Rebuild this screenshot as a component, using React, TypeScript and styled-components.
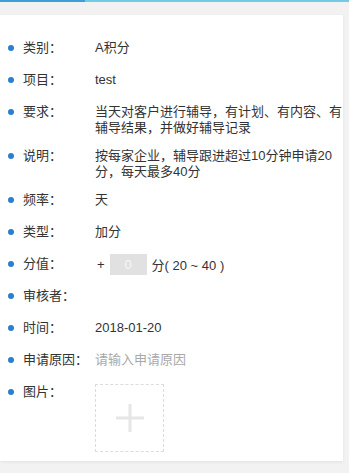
import styled, { createGlobalStyle } from 'styled-components';

const GlobalStyle = createGlobalStyle`
  html, body {
    margin: 0;
    padding: 0;
    background: #f2f2f2;
  }
  body {
    font-family: "Liberation Sans", "Noto Sans CJK SC", sans-serif;
    font-size: 13px;
    color: #333;
  }
`;

const Page = styled.div`
  width: 349px;
  height: 473px;
  display: flex;
  flex-direction: column;
  background: #f2f2f2;
  overflow: hidden;
`;

const TabLine = styled.div`
  display: flex;
  height: 2px;
  background: #70cbe6;
`;

const TabActive = styled.div`
  width: 85px;
  background: #3f9ed6;
`;

const Card = styled.div`
  box-sizing: border-box;
  margin: 13px 6px 0 0;
  height: 446px;
  padding: 17px 0 0 0;
  background: #fff;
  box-shadow: 0 1px 3px rgba(0, 0, 0, 0.07);
`;

const Row = styled.div`
  display: flex;
  align-items: flex-start;
  padding: 6px 0;
`;

const Bullet = styled.span`
  flex: none;
  width: 6px;
  height: 6px;
  border-radius: 50%;
  background: #2c7fd0;
  margin: 7px 9px 0 8px;
`;

const Label = styled.div`
  flex: none;
  width: 72px;
  line-height: 20px;
  color: #333;
  white-space: nowrap;
`;

const Value = styled.div`
  flex: 1;
  min-width: 0;
  line-height: 16px;
  margin: 2px 0 -2px;
  color: #333;
`;

const ScoreValue = styled.div`
  display: flex;
  align-items: center;
  height: 20px;
  color: #333;
`;

const Plus = styled.span`
  margin: 0 5px 0 2px;
`;

const ScoreInput = styled.input`
  box-sizing: border-box;
  width: 37px;
  height: 21px;
  margin: 0 5px 0 0;
  border: none;
  padding: 0;
  background: #e1e1e1;
  color: #f7f7f7;
  text-align: center;
  font: inherit;
  outline: none;
`;

const ReasonInput = styled.input`
  width: 100%;
  height: 16px;
  border: none;
  padding: 0;
  margin: 0;
  font: inherit;
  line-height: 16px;
  color: #333;
  background: transparent;
  outline: none;
  &::placeholder {
    color: #a9a9a9;
  }
`;

const Upload = styled.div`
  box-sizing: border-box;
  width: 69px;
  height: 68px;
  border: 1px dashed #dcdcdc;
  display: flex;
  align-items: center;
  justify-content: center;
`;

const items: { label: string; value: string }[] = [
  { label: '类别：', value: 'A积分' },
  { label: '项目：', value: 'test' },
  { label: '要求：', value: '当天对客户进行辅导，有计划、有内容、有辅导结果，并做好辅导记录' },
  { label: '说明：', value: '按每家企业，辅导跟进超过10分钟申请20分，每天最多40分' },
  { label: '频率：', value: '天' },
  { label: '类型：', value: '加分' },
];

export default function App() {
  return (
    <Page>
      <GlobalStyle />
      <TabLine>
        <TabActive />
      </TabLine>
      <Card>
        {items.map((it) => (
          <Row key={it.label}>
            <Bullet />
            <Label>{it.label}</Label>
            <Value>{it.value}</Value>
          </Row>
        ))}
        <Row>
          <Bullet />
          <Label>分值：</Label>
          <ScoreValue>
            <Plus>+</Plus>
            <ScoreInput readOnly value="0" />
            <span>分( 20 ~ 40 )</span>
          </ScoreValue>
        </Row>
        <Row>
          <Bullet />
          <Label>审核者：</Label>
          <Value />
        </Row>
        <Row>
          <Bullet />
          <Label>时间：</Label>
          <Value>2018-01-20</Value>
        </Row>
        <Row>
          <Bullet />
          <Label>申请原因：</Label>
          <Value>
            <ReasonInput placeholder="请输入申请原因" />
          </Value>
        </Row>
        <Row>
          <Bullet />
          <Label>图片：</Label>
          <Value>
            <Upload>
              <svg width="28" height="28" viewBox="0 0 28 28">
                <rect x="0" y="12.5" width="28" height="3" fill="#e6e6e6" />
                <rect x="12.5" y="0" width="3" height="28" fill="#e6e6e6" />
              </svg>
            </Upload>
          </Value>
        </Row>
      </Card>
    </Page>
  );
}
